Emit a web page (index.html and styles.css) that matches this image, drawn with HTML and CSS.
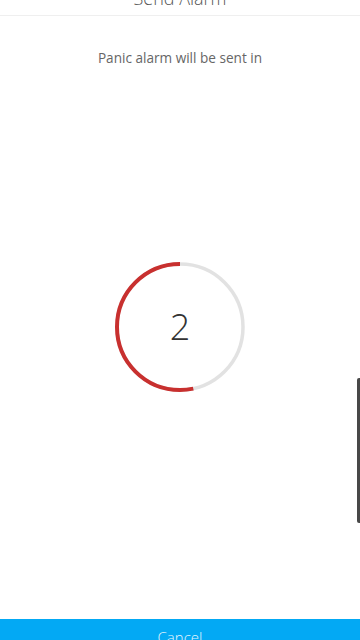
FILE: index.html
```html
<!DOCTYPE html>
<html>
<head>
<meta charset="utf-8">
<link rel="stylesheet" href="styles.css">
</head>
<body>
<div class="screen">
  <header class="header"><h1 class="title">Send Alarm</h1></header>
  <main class="content">
    <p class="message">Panic alarm will be sent in</p>
    <div class="timer">
      <svg class="ring" width="132" height="132" viewBox="0 0 132 132">
        <circle cx="66" cy="66" r="63" fill="none" stroke="#e2e2e2" stroke-width="3.5"/>
        <circle cx="66" cy="66" r="63" fill="none" stroke="#c8302f" stroke-width="4" stroke-dasharray="211 400" transform="rotate(-90 66 66) scale(1 -1) translate(0 -132)" />
      </svg>
      <span class="count">2</span>
    </div>
  </main>
  <button class="cancel">Cancel</button>
  <div class="scrollbar"></div>
</div>
</body>
</html>
```
FILE: styles.css
```css
html, body {
  margin: 0;
  padding: 0;
  background: #fff;
}
.screen {
  position: relative;
  width: 360px;
  height: 640px;
  overflow: hidden;
  display: flex;
  flex-direction: column;
  font-family: "Open Sans", "Liberation Sans", sans-serif;
}
.header {
  height: 15px;
  border-bottom: 1.5px solid #efefef;
  flex: none;
}
.title {
  margin: -10px 0 0 0;
  font-size: 18px;
  font-weight: 300;
  line-height: 16px;
  color: #555;
  text-align: center;
}
.content {
  flex: 1;
  display: flex;
  flex-direction: column;
  align-items: center;
}
.message {
  margin: 32px 0 0 0;
  font-size: 13.6px;
  line-height: 20px;
  color: #666;
  font-weight: 400;
}
.timer {
  margin-top: 193px;
  position: relative;
  width: 132px;
  height: 132px;
  display: flex;
  align-items: center;
  justify-content: center;
}
.ring {
  position: absolute;
  left: 0;
  top: 0;
}
.count {
  position: relative;
  font-size: 36px;
  font-weight: 300;
  color: #333;
  line-height: 40px;
}
.cancel {
  flex: none;
  height: 48px;
  border: none;
  margin: 0;
  background: #03a9f4;
  color: #e8f6fd;
  font-family: inherit;
  font-size: 15px;
  font-weight: 300;
  line-height: 20px;
  padding: 8px 0 20px;
  text-align: center;
  width: 100%;
  margin-bottom: -27px;
}
.scrollbar {
  position: absolute;
  right: 0;
  top: 378px;
  width: 3px;
  height: 145px;
  background: #484848;
  border-radius: 2px 0 0 2px;
}
```
